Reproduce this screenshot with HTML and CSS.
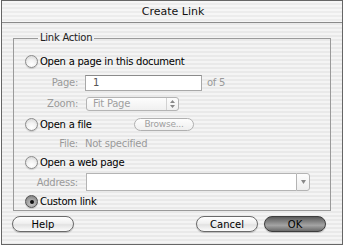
FILE: index.html
```html
<!DOCTYPE html>
<html lang="en">
<head>
    <meta charset="UTF-8">
    <title>Create Link</title>
    <link rel="stylesheet" href="styles.css">
</head>
<body>
    <div class="window">
        <div class="titlebar">Create Link</div>

        <fieldset class="group">
            <legend>Link Action</legend>

            <div class="row r1">
                <span class="radio"></span>
                <span class="choice">Open a page in this document</span>
            </div>
            <div class="row r2">
                <span class="label">Page:</span>
                <div class="textbox page-box">1</div>
                <span class="muted of">of 5</span>
            </div>
            <div class="row r3">
                <span class="label">Zoom:</span>
                <div class="popup">
                    <span class="popup-text">Fit Page</span>
                    <span class="stepper">
                        <svg width="5" height="8" viewBox="0 0 5 8"><path d="M2.5 0 L5 3 L0 3 Z M0 5 L5 5 L2.5 8 Z" fill="#888"/></svg>
                    </span>
                </div>
            </div>
            <div class="row r4">
                <span class="radio"></span>
                <span class="choice file-choice">Open a file</span>
                <span class="small-btn">Browse...</span>
            </div>
            <div class="row r5">
                <span class="label">File:</span>
                <span class="muted">Not specified</span>
            </div>
            <div class="row r6">
                <span class="radio"></span>
                <span class="choice">Open a web page</span>
            </div>
            <div class="row r7">
                <span class="label">Address:</span>
                <div class="combo">
                    <span class="combo-field"></span>
                    <span class="combo-arrow">
                        <svg width="5" height="4" viewBox="0 0 5 4"><path d="M0 0 L5 0 L2.5 4 Z" fill="#888"/></svg>
                    </span>
                </div>
            </div>
            <div class="row r8">
                <span class="radio on"><span class="dot"></span></span>
                <span class="choice">Custom link</span>
            </div>
        </fieldset>

        <div class="buttons">
            <button class="btn">Help</button>
            <span class="spacer"></span>
            <button class="btn">Cancel</button>
            <button class="btn default">OK</button>
        </div>
    </div>
</body>
</html>
```

FILE: styles.css
```css
body, html {
    margin: 0;
    padding: 0;
    background-color: #fff;
    font-family: 'DejaVu Sans', 'Lucida Grande', sans-serif;
    font-size: 10px;
    letter-spacing: -0.25px;
    color: #000;
}

.window {
    margin: 0 1px;
    height: 243px;
    border: 1px solid #666;
    background: repeating-linear-gradient(to bottom, #f4f4f4 0, #f4f4f4 2px, #e9e9e9 2px, #e9e9e9 4px);
    display: flex;
    flex-direction: column;
}

.titlebar {
    height: 21px;
    flex: none;
    border-bottom: 1px solid #8a8a8a;
    display: flex;
    align-items: center;
    justify-content: center;
    font-size: 11px;
    letter-spacing: 0;
    color: #111;
    padding-left: 2px;
    background: repeating-linear-gradient(to bottom, #f6f6f6 0, #f6f6f6 2px, #ececec 2px, #ececec 4px);
}

.group {
    margin: 8px 11px 0 11px;
    padding: 6px 0 0 11px;
    border: 1px solid #9a9a9a;
    min-width: 0;
    height: 172px;
    flex: none;
    display: flex;
    flex-direction: column;
}

.group legend {
    margin-left: 13px;
    padding: 0 2px;
    color: #222;
    line-height: 14px;
}

.row {
    display: flex;
    align-items: center;
    flex: none;
}

.r1 { height: 21px; }
.r2 { height: 21px; }
.r3 { height: 21px; }
.r4 { height: 20px; }
.r5 { height: 19px; }
.r6 { height: 19px; }
.r7 { height: 20px; }
.r8 { height: 19px; }

.radio {
    width: 11px;
    height: 11px;
    border: 1px solid #8c8c8c;
    border-radius: 50%;
    background: radial-gradient(circle at 50% 75%, #ffffff 0, #f2f2f2 45%, #cfcfcf 100%);
    box-shadow: 0 1px 1px rgba(0, 0, 0, 0.15);
    display: flex;
    align-items: center;
    justify-content: center;
    flex: none;
}

.radio.on {
    border-color: #555;
    background: radial-gradient(circle at 50% 70%, #c8c8c8 0, #9a9a9a 60%, #6e6e6e 100%);
}

.radio .dot {
    width: 4px;
    height: 4px;
    border-radius: 50%;
    background-color: #111;
}

.choice {
    margin-left: 2px;
    color: #000;
}

.file-choice {
    width: 94px;
}

.label {
    width: 64px;
    margin-left: -11px;
    text-align: right;
    color: #9a9a9a;
    margin-right: 7px;
    flex: none;
}

.muted {
    color: #9a9a9a;
}

.textbox {
    width: 108px;
    height: 14px;
    border: 1px solid #a8a8a8;
    border-top-color: #8a8a8a;
    background-color: #fff;
    padding-left: 7px;
    line-height: 14px;
    color: #555;
}

.of {
    margin-left: 5px;
}

.popup {
    margin-left: 1px;
    width: 91px;
    height: 12px;
    border: 1px solid #b4b4b4;
    border-radius: 3px;
    background: linear-gradient(to bottom, #fdfdfd, #f0f0f0);
    display: flex;
    align-items: center;
}

.popup-text {
    flex: 1;
    padding-left: 6px;
    color: #a0a0a0;
}

.stepper {
    width: 11px;
    height: 12px;
    border-left: 1px solid #d2d2d2;
    display: flex;
    align-items: center;
    justify-content: center;
}

.small-btn {
    width: 58px;
    height: 11px;
    border: 1px solid #b0b0b0;
    border-radius: 7px;
    background: linear-gradient(to bottom, #fdfdfd, #efefef);
    color: #a0a0a0;
    display: flex;
    align-items: center;
    justify-content: center;
    font-size: 9px;
}

.combo {
    margin-left: 1px;
    width: 224px;
    height: 18px;
    display: flex;
}

.combo-field {
    flex: 1;
    border: 1px solid #b4b4b4;
    border-right: none;
    background-color: #fff;
}

.combo-arrow {
    width: 12px;
    border: 1px solid #b4b4b4;
    border-radius: 0 3px 3px 0;
    background: linear-gradient(to bottom, #fdfdfd, #eeeeee);
    display: flex;
    align-items: center;
    justify-content: center;
}

.buttons {
    display: flex;
    align-items: center;
    padding: 5px 16px 0 10px;
}

.spacer {
    flex: 1;
}

.btn {
    width: 62px;
    height: 16px;
    padding: 0;
    margin-left: 6px;
    border: 1px solid #6a6a6a;
    border-radius: 8px;
    background: linear-gradient(to bottom, #ffffff 0, #f0f0f0 45%, #e2e2e2 55%, #fbfbfb 100%);
    box-shadow: 0 1px 1px rgba(0, 0, 0, 0.2);
    font-family: 'DejaVu Sans', sans-serif;
    font-size: 10px;
    color: #000;
}

.btn:first-child {
    margin-left: 0;
}

.btn.default {
    border-color: #3c3c3c;
    background: linear-gradient(to bottom, #5a5a5a 0, #8c8c8c 40%, #a4a4a4 60%, #6a6a6a 100%);
}
```
